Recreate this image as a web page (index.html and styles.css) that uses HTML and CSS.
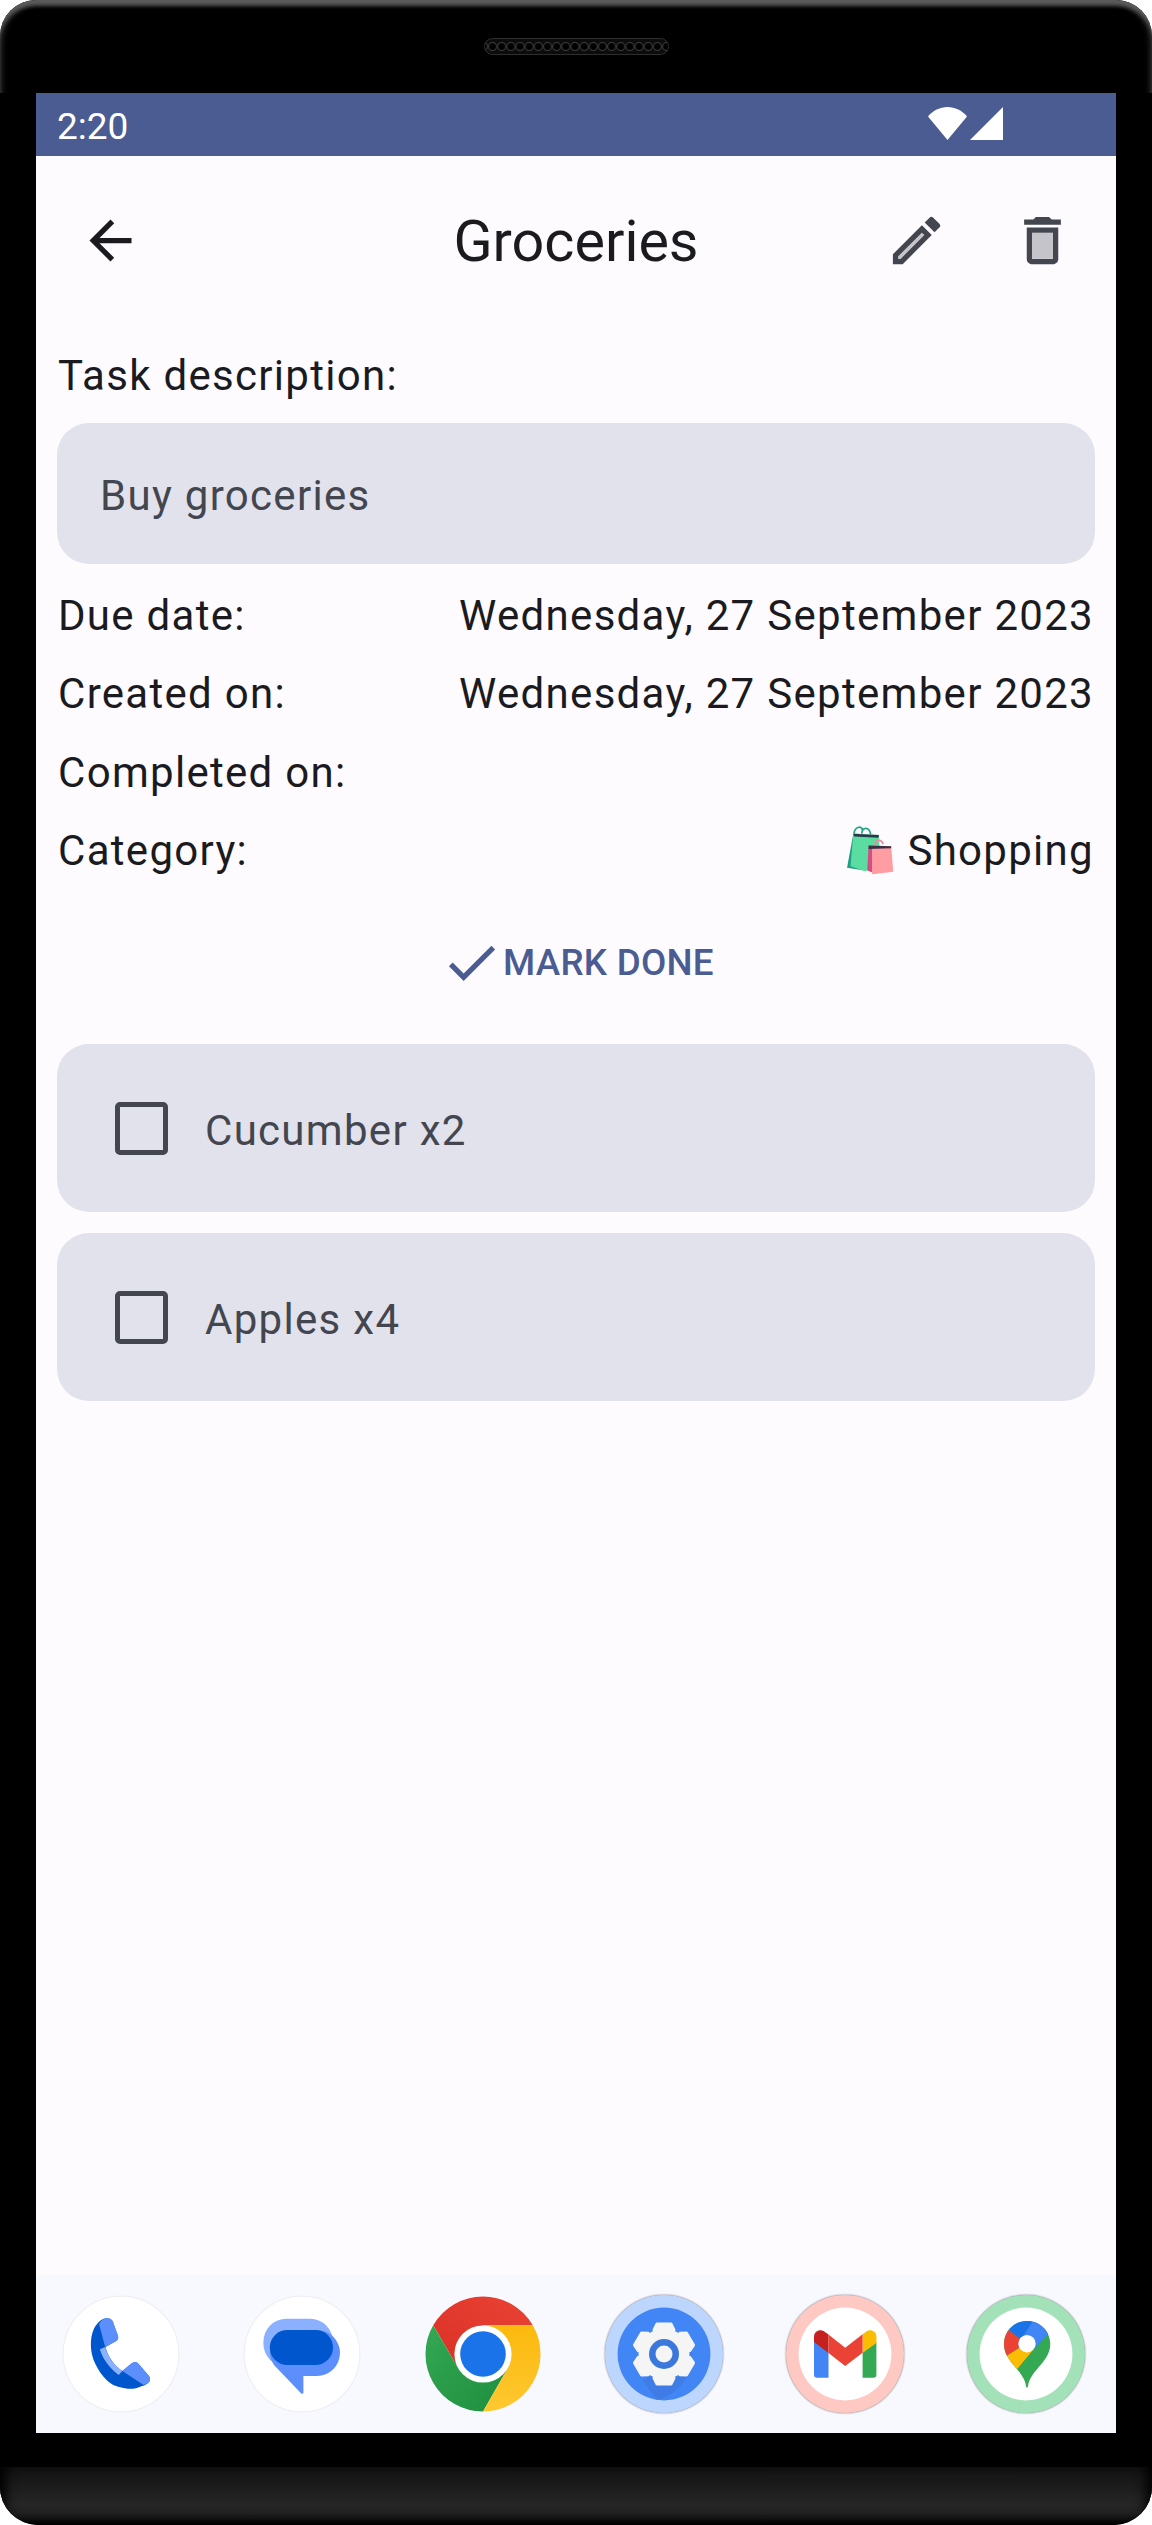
FILE: index.html
```html
<!DOCTYPE html>
<html lang="en">
<head>
    <meta charset="UTF-8">
    <meta name="viewport" content="width=device-width, initial-scale=1.0">
    <title>Groceries</title>
    <link rel="stylesheet" href="styles.css">
</head>
<body>
    <div class="phone">
        <div class="bezel-top">
            <div class="speaker"></div>
        </div>
        <div class="screen">
            <div class="status-bar">
                <span class="clock">2:20</span>
                <div class="status-icons">
                    <svg class="wifi" viewBox="0 0 39 33"><path d="M19.5 33L0 9.5C5 3.5 12 0 19.5 0S34 3.5 39 9.5z"/></svg>
                    <svg class="signal" viewBox="0 0 33 33"><path d="M33 0V33H0z"/></svg>
                </div>
            </div>
            <main class="content">
                <header class="top-bar">
                    <svg class="icon back" viewBox="0 0 24 24"><path d="M20 11H7.83l5.59-5.59L12 4l-8 8 8 8 1.41-1.41L7.83 13H20v-2z"/></svg>
                    <h1>Groceries</h1>
                    <svg class="icon edit" viewBox="0 0 24 24"><path class="tone" d="M5 18.08V19h.92l9.06-9.06-.92-.92z"/><path d="M20.71 7.04a1 1 0 0 0 0-1.41l-2.34-2.34a1 1 0 0 0-1.41 0l-1.83 1.83 3.75 3.75zM3 17.25V21h3.75L17.81 9.94l-3.75-3.75zM5.92 19H5v-.92l9.06-9.06.92.92z"/></svg>
                    <svg class="icon trash" viewBox="0 0 24 24"><path class="tone" d="M8 9h8v10H8z"/><path d="M15.5 4l-1-1h-5l-1 1H5v2h14V4zM6 19c0 1.1.9 2 2 2h8c1.1 0 2-.9 2-2V7H6v12zM8 9h8v10H8V9z"/></svg>
                </header>

                <div class="details">
                    <p class="label">Task description:</p>
                    <div class="card description">Buy groceries</div>
                    <div class="info-list">
                        <div class="info-row"><span>Due date:</span><span>Wednesday, 27 September 2023</span></div>
                        <div class="info-row"><span>Created on:</span><span>Wednesday, 27 September 2023</span></div>
                        <div class="info-row"><span>Completed on:</span><span></span></div>
                        <div class="info-row">
                            <span>Category:</span>
                            <span class="category">
                                <svg class="bags" viewBox="0 0 135 141">
                                    <path d="M20 22C22 2 40 -2 45 12M42 22C44 2 64 0 68 24" fill="none" stroke="#1fa585" stroke-width="5"/>
                                    <path d="M0 120L18 22H34L50 128z" fill="#1f9d85"/>
                                    <path d="M18 22L92 26L95 112L52 130L10 116z" fill="#5bdca0"/>
                                    <path d="M18 22L92 26L90 34L20 30z" fill="#2b3a4a"/>
                                    <path d="M80 58C80 38 98 36 104 52" fill="none" stroke="#f08aa0" stroke-width="5"/>
                                    <path d="M62 58H80L84 138L58 128z" fill="#d14f86"/>
                                    <path d="M72 58H127L133 132L72 139z" fill="#ff9da3"/>
                                    <path d="M62 56L127 58V64L62 66z" fill="#3a2f45"/>
                                </svg>
                                Shopping
                            </span>
                        </div>
                    </div>
                    <div class="mark-done">
                        <svg class="icon check" viewBox="0 0 24 24"><path d="M9 16.17L4.83 12l-1.42 1.41L9 19 21 7l-1.41-1.41z"/></svg>
                        <span>MARK DONE</span>
                    </div>
                    <ul class="subtasks">
                        <li class="card subtask"><span class="checkbox"></span><span class="subtask-name">Cucumber x2</span></li>
                        <li class="card subtask"><span class="checkbox"></span><span class="subtask-name">Apples x4</span></li>
                    </ul>
                </div>
            </main>
            <nav class="dock">
                <div class="app plain">
                    <svg viewBox="0 0 118 118">
                        <path fill="#0057cd" d="M44.2 23.3C47 22.8 49.5 24 50.6 26L56 41C56.6 43 56 45 54.2 46L43.5 52C46 62 52 70 60.3 76L69.2 68.7C72 66.8 74.6 67 76.4 68.7L87 81C88.6 83 88.4 86 86.4 87.7C84 89.8 82 90.6 80 91C75 93.4 70 94.2 65.6 93.7C58 92.4 52 91 47.8 87.7C41 82.5 37 76 33.5 69.3C30.5 63 29 57 28.9 51C28.7 45 29.6 39 31.7 34.3C33.4 30.5 36 27.5 38.9 25.3C40.6 24 42.4 23.5 44.2 23.3z"/>
                        <path fill="#5c8ffb" d="M37.1 29.3C38 27 41 23.6 44.2 23.3C47 22.8 49.5 24 50.6 26L56 41C56.6 43 56 45 54.2 46L43.2 52zM60.3 76L69.2 68.7C72 66.8 74.6 67 76.4 68.7L87 81C88.6 83 88.4 86 86.4 87.7L81.7 90z"/>
                        <path fill="#8ab0ff" d="M37.8 54.3L43.2 52C46 62 52 70 60.3 76L56.7 80C47 73 41 64 37.8 54.3z"/>
                    </svg>
                </div>
                <div class="app plain">
                    <svg viewBox="0 0 118 118">
                        <rect x="20.4" y="23.7" width="69.6" height="48" rx="23" fill="#8ab0ff"/>
                        <path fill="#5c8ffb" d="M50 35H74A23 23 0 0 1 74 81H60.4V97.5C60.4 99 59 99.2 58 98.2L31 70C28 65 26.8 62 26.8 58A23 23 0 0 1 50 35z"/>
                        <rect x="26.8" y="35" width="63.2" height="35" rx="17.5" fill="#0057cd"/>
                    </svg>
                </div>
                <div class="app">
                    <svg viewBox="0 0 118 118">
                        <defs>
                            <linearGradient id="chromeRed" x1="0" y1="1" x2="1" y2="0"><stop offset="0" stop-color="#d93025"/><stop offset="1" stop-color="#ea4335"/></linearGradient>
                            <linearGradient id="chromeGreen" x1="1" y1="1" x2="0" y2="0"><stop offset="0" stop-color="#1e8e3e"/><stop offset="1" stop-color="#34a853"/></linearGradient>
                            <linearGradient id="chromeYellow" x1="0" y1="0" x2="0" y2="1"><stop offset="0" stop-color="#fcb90d"/><stop offset="1" stop-color="#fdc830"/></linearGradient>
                        </defs>
                        <path fill="url(#chromeRed)" d="M9.2 30.25A57.5 57.5 0 0 1 108.8 30.25H59L34.2 73.3z"/>
                        <path fill="url(#chromeGreen)" d="M9.2 30.25L34.2 73.3H83.8L59 116.5A57.5 57.5 0 0 1 9.2 30.25z"/>
                        <path fill="url(#chromeYellow)" d="M108.8 30.25H59L83.8 73.3L59 116.5A57.5 57.5 0 0 0 108.8 30.25z"/>
                        <circle cx="59" cy="59" r="28.6" fill="#fff"/>
                        <circle cx="59" cy="59" r="22.8" fill="#1a73e8"/>
                    </svg>
                </div>
                <div class="app ring blue-ring">
                    <svg viewBox="0 0 118 118">
                        <defs>
                            <polygon id="tooth" points="-10,-24 -7,-30 7,-30 10,-24" fill="#f5f5f5" stroke="#f5f5f5" stroke-width="3" stroke-linejoin="round"/>
                        </defs>
                        <circle cx="59" cy="59" r="46.4" fill="#4285f4"/>
                        <path fill="#3f7ce6" d="M85 46A46.4 46.4 0 0 1 52 105L38 86z"/>
                        <g transform="translate(59 59)">
                            <circle r="25.5" fill="#f5f5f5"/>
                            <use href="#tooth"/>
                            <use href="#tooth" transform="rotate(60)"/>
                            <use href="#tooth" transform="rotate(120)"/>
                            <use href="#tooth" transform="rotate(180)"/>
                            <use href="#tooth" transform="rotate(240)"/>
                            <use href="#tooth" transform="rotate(300)"/>
                            <circle r="15" fill="#3b78dc"/>
                            <circle r="8.5" fill="#f5f5f5"/>
                        </g>
                    </svg>
                </div>
                <div class="app ring red-ring">
                    <svg viewBox="0 0 118 118">
                        <circle cx="59" cy="59" r="46.4" fill="#fff"/>
                        <path fill="#4285f4" d="M28 46L42.5 57V82.7H31A3 3 0 0 1 28 79.7z"/>
                        <path fill="#34a853" d="M90.4 47L76.6 57.7V82.7H87.4A3 3 0 0 0 90.4 79.7z"/>
                        <path fill="#fbbc04" d="M76.6 39.3L81 36C85 33.8 90.4 36.5 90.4 41.5V48L76.6 57.7z"/>
                        <path fill="#c5221f" d="M28 41.5C28 36.5 33.5 33.8 37.5 36L42.5 39.5V58L28 47z"/>
                        <path fill="#ea4335" d="M42.5 39.5L59.2 52.7L76.6 39.3V57.7L59.2 71L42.5 58z"/>
                    </svg>
                </div>
                <div class="app ring green-ring">
                    <svg viewBox="0 0 118 118">
                        <defs>
                            <clipPath id="pin"><path d="M60 26C72.8 26 83.3 36.3 83.3 49C83.3 58 78 65 71 73C66 79 62 84 61 91C60.8 93 59.2 93 59 91C58 84 54 79 49 73C42 65 37 58 37 49C37 36.3 47.2 26 60 26z"/></clipPath>
                        </defs>
                        <circle cx="59" cy="59" r="46.4" fill="#fff"/>
                        <g clip-path="url(#pin)">
                            <rect x="30" y="20" width="60" height="80" fill="#34a853"/>
                            <path fill="#1a73e8" d="M41.8 35L52 43.3L66.6 54.3L80.4 40L90 20H30z"/>
                            <path fill="#4285f4" d="M66 26L55 43L66.6 54.3L80.4 40L90 20H70z"/>
                            <path fill="#ea4335" d="M30 30L41.8 35L52 43.3L51.8 53.3L39.5 61L30 62z"/>
                            <path fill="#fbbc04" d="M39.5 61L51.8 53.3L66.6 54.3L50 74.3L40 75L30 62z"/>
                        </g>
                        <circle cx="60" cy="48.7" r="8.7" fill="#fff"/>
                    </svg>
                </div>
            </nav>
        </div>
        <div class="bezel-gap"></div>
        <div class="chin"></div>
    </div>
</body>
</html>
```

FILE: styles.css
```css
* {
    box-sizing: border-box;
}
html, body {
    margin: 0;
    padding: 0;
    background: #fff;
}
body {
    font-family: Roboto, sans-serif;
    color: #1b1b1f;
}
.phone {
    width: 1152px;
    height: 2525px;
    display: flex;
    flex-direction: column;
    background: #000;
    border-radius: 36px 36px 38px 38px;
    overflow: hidden;
}
.bezel-top {
    height: 93px;
    display: flex;
    justify-content: center;
    padding-top: 38px;
    border-radius: 36px 36px 0 0;
    box-shadow: inset 0 7px 4px -2px #5c5c5c, inset 4px 6px 6px -3px #3a3a3a, inset -4px 6px 6px -3px #3a3a3a;
}
.speaker {
    width: 185px;
    height: 17px;
    border-radius: 9px;
    border: 1px solid #2e2e2e;
    background: radial-gradient(circle at 50% 50%, #000 3px, #3c3c3c 4px, #0c0c0c 5px) 3px 0 / 9.16px 15px repeat-x;
}
.screen {
    flex: 1;
    margin: 0 36px;
    display: flex;
    flex-direction: column;
    background: #fefbff;
}
.bezel-gap {
    height: 34px;
}
.chin {
    height: 58px;
    background: linear-gradient(#111 0, #262626 38px, #202020 46px, #000 58px);
    box-shadow: inset 14px 0 12px -8px #000, inset -14px 0 12px -8px #000;
}

/* status bar */
.status-bar {
    height: 63px;
    display: flex;
    align-items: center;
    justify-content: space-between;
    background: #4a5c92;
    color: #fff;
    padding: 0 113px 0 21px;
}
.clock {
    font-size: 37px;
    line-height: 45px;
    padding-top: 3px;
}
.status-icons {
    display: flex;
    gap: 3px;
    margin-bottom: 3px;
}
.wifi, .signal {
    height: 33px;
    fill: #fff;
}
.wifi { width: 39px; }
.signal { width: 33px; }

/* content */
.content {
    flex: 1;
}
.top-bar {
    height: 168px;
    display: flex;
    align-items: center;
    padding: 0 42px 0 43px;
}
.top-bar h1 {
    flex: 1;
    margin: 0;
    padding: 3px 0 0 125px;
    text-align: center;
    font-size: 57.5px;
    font-weight: 400;
    line-height: 76px;
}
.icon {
    width: 63px;
    height: 63px;
    flex: none;
    fill: #44464f;
}
.icon.back { fill: #1b1b1f; }
.icon.edit { margin-right: 63px; }
.tone { fill: #c6c4cb; }

.details {
    padding: 20px 21px 0;
    font-size: 42px;
    line-height: 63px;
    letter-spacing: 1.3px;
}
.label {
    margin: 0 0 16px;
    padding-left: 1px;
}
.card {
    background: #e1e2ec;
    border-radius: 32px;
    color: #44464f;
}
.description {
    height: 141px;
    padding: 41px 43px;
}
.info-list {
    margin-top: 12px;
}
.info-row {
    display: flex;
    justify-content: space-between;
    height: 78.5px;
    align-items: center;
    padding: 0 1px;
}
.category {
    display: flex;
    align-items: center;
    gap: 13px;
}
.bags {
    width: 47px;
    height: 49px;
}
.mark-done {
    height: 105px;
    margin-top: 20px;
    padding-left: 2px;
    display: flex;
    align-items: center;
    justify-content: center;
    color: #4a5c92;
    font-size: 36.75px;
    font-weight: 500;
    letter-spacing: 0.26px;
}
.mark-done .icon {
    fill: #4a5c92;
}
.subtasks {
    list-style: none;
    margin: 29px 0 0;
    padding: 0;
    display: flex;
    flex-direction: column;
    gap: 21px;
}
.subtask {
    height: 168px;
    display: flex;
    align-items: center;
    padding-left: 58px;
}
.subtask-name {
    padding-top: 4px;
    margin-left: -1px;
}
.checkbox {
    width: 53px;
    height: 53px;
    margin-right: 38px;
    border: 5px solid #44464f;
    border-radius: 5px;
}

/* dock */
.dock {
    height: 158px;
    display: flex;
    align-items: center;
    gap: 63px;
    padding-left: 25.5px;
    background: #f8f8ff;
}
.app {
    width: 118px;
    height: 118px;
    flex: none;
    border-radius: 50%;
}
.app svg {
    display: block;
    width: 118px;
    height: 118px;
}
.plain {
    background: radial-gradient(circle closest-side, #fff 57px, #ececf2 57.8px, transparent 59px);
}
.ring {
    box-shadow: 0 0 2px rgba(0, 0, 0, 0.6);
}
.blue-ring { background: #bdd6fd; }
.red-ring { background: #fec8c3; }
.green-ring { background: #a3e2b8; }
```
